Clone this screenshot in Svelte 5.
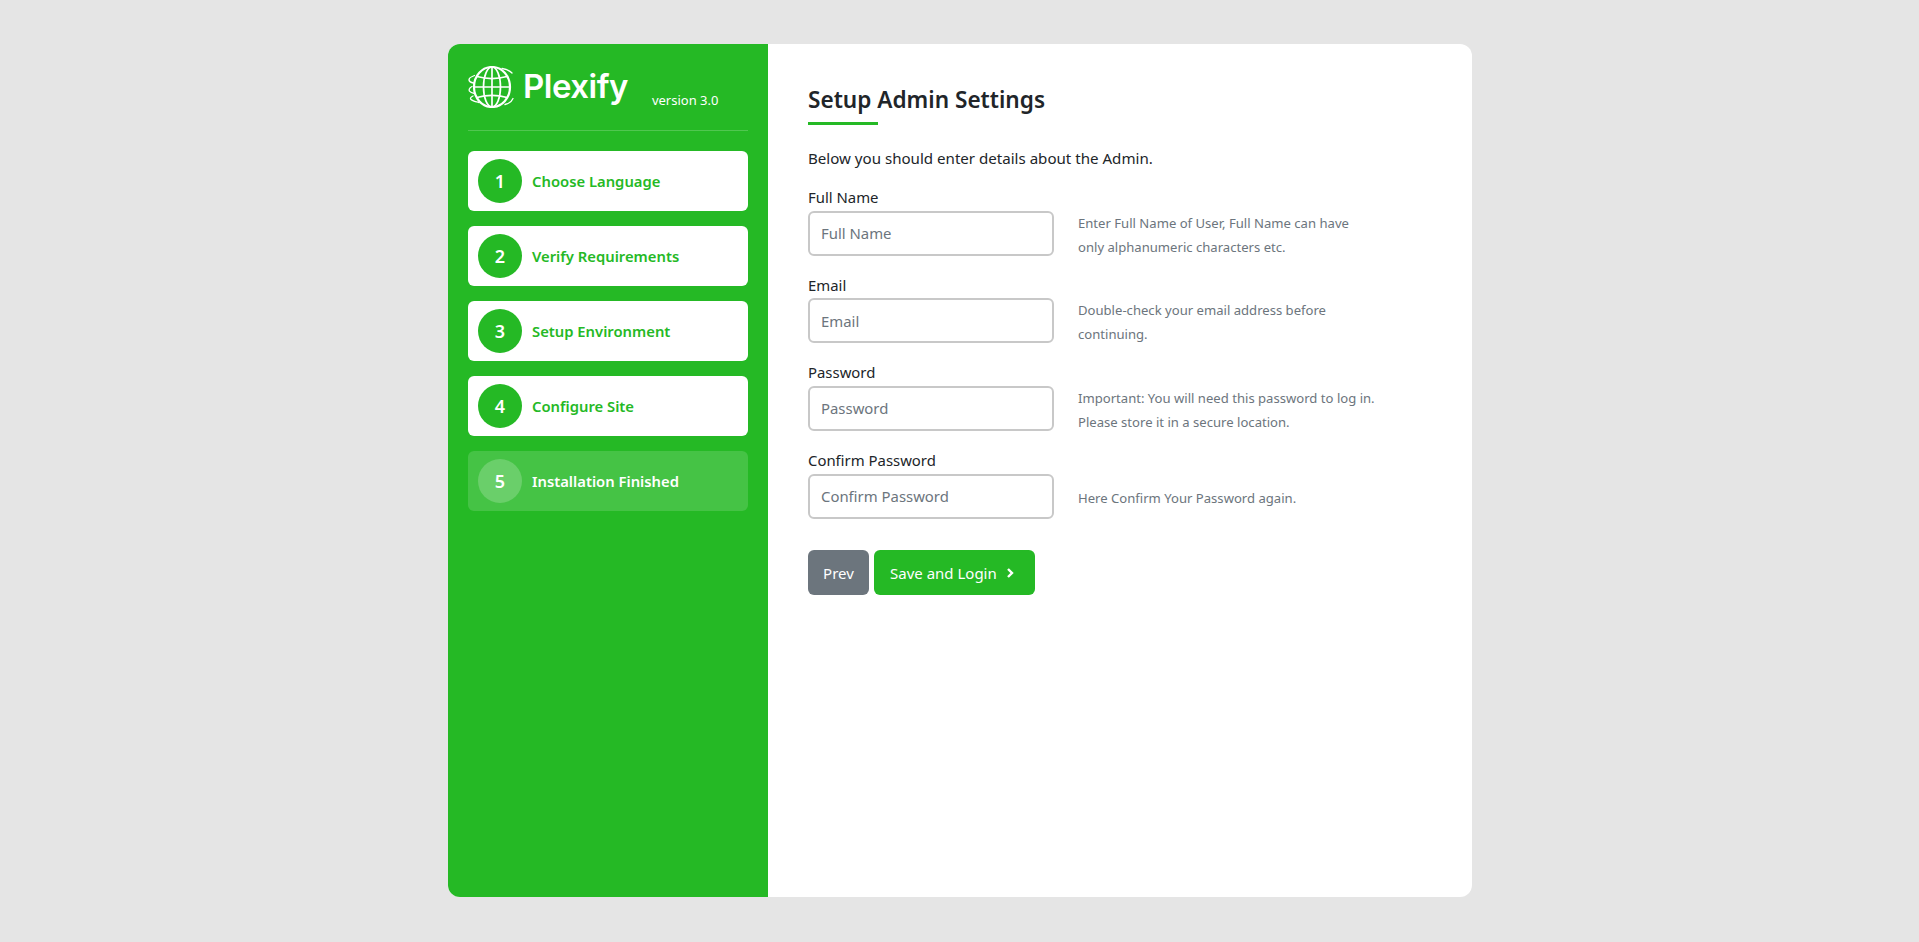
<script>
	const steps = [
		{ n: 1, label: 'Choose Language', done: true },
		{ n: 2, label: 'Verify Requirements', done: true },
		{ n: 3, label: 'Setup Environment', done: true },
		{ n: 4, label: 'Configure Site', done: true },
		{ n: 5, label: 'Installation Finished', done: false }
	];

	const fields = [
		{ label: 'Full Name', type: 'text', hint: ['Enter Full Name of User, Full Name can have', 'only alphanumeric characters etc.'] },
		{ label: 'Email', type: 'email', hint: ['Double-check your email address before', 'continuing.'] },
		{ label: 'Password', type: 'password', hint: ['Important: You will need this password to log in.', 'Please store it in a secure location.'] },
		{ label: 'Confirm Password', type: 'password', hint: ['Here Confirm Your Password again.'] }
	];
</script>

<div class="page">
	<div class="card">
		<aside class="sidebar">
			<div class="brand">
				<svg class="globe" viewBox="0 0 46 42" fill="none" stroke="#fff" stroke-linecap="round">
					<ellipse cx="24" cy="21" rx="18" ry="20" stroke-width="2.200" />
					<ellipse cx="24" cy="21" rx="8.500" ry="20" stroke-width="1.700" />
					<path d="M24 1v40" stroke-width="1.700" />
					<path d="M9 10.500c9 2.500 21 2.500 30 0M6 21h36M9 31.500c9-2.500 21-2.500 30 0" stroke-width="1.700" />
					<path d="M34 2.500c4 .5 7.500 2 10 4.500M6.500 9.500C2.500 11 .8 12.500 1 14c.3 1.500 2 2.500 4.500 3M4 20.500C1 22 .8 24 1.500 25.200 2.500 26.500 4 27 6.500 27.500M5 30C2.500 31 2 32.500 3 33.500c1.500 1.500 4 2 8 3M37 38.500c4-1 7-3.500 8-6" stroke-width="1.300" />
				</svg>
				<span class="name">Plexify</span>
				<span class="version">version 3.0</span>
			</div>
			<hr />
			<ul class="steps">
				{#each steps as step}
					<li class="step" class:done={step.done}>
						<span class="num">{step.n}</span>
						<span class="label">{step.label}</span>
					</li>
				{/each}
			</ul>
		</aside>

		<main class="content">
			<h2>Setup Admin Settings</h2>
			<p class="intro">Below you should enter details about the Admin.</p>
			<form on:submit|preventDefault>
				{#each fields as field}
					<div class="field">
						<label for={field.label}>{field.label}</label>
						<div class="row">
							<input id={field.label} type={field.type} placeholder={field.label} />
							<div class="hint">
								{#each field.hint as line}
									<div>{line}</div>
								{/each}
							</div>
						</div>
					</div>
				{/each}
				<div class="actions">
					<button type="button" class="prev">Prev</button>
					<button type="submit" class="next">
						Save and Login
						<svg class="chevron" viewBox="0 0 8 10" fill="none" stroke="#fff" stroke-width="2.400">
							<path d="M2 1l4 4-4 4" />
						</svg>
					</button>
				</div>
			</form>
		</main>
	</div>
</div>

<style>
	:global(body) {
		background: #e5e5e5;
		font-family: "Noto Sans", "Open Sans", sans-serif;
		color: #212529;
	}

	.page {
		height: 942px;
		padding: 44px 447px 45px 448px;
		box-sizing: border-box;
	}

	.card {
		display: flex;
		height: 853px;
		background: #fff;
		border-radius: 12px;
		overflow: hidden;
	}

	.sidebar {
		width: 320px;
		padding: 20px;
		box-sizing: border-box;
		background: #25b925;
		flex-shrink: 0;
	}

	.brand {
		display: flex;
		align-items: flex-start;
		height: 45px;
		margin-bottom: 21px;
		color: #fff;
	}

	.globe {
		width: 46px;
		height: 42px;
		margin-top: 2px;
		flex-shrink: 0;
	}

	.name {
		margin: 2px 0 0 9px;
		font-family: Inter, sans-serif;
		font-size: 33px;
		font-weight: 600;
		line-height: 40px;
		letter-spacing: -0.5px;
	}

	.version {
		margin: 27px 0 0 24px;
		font-size: 13px;
		line-height: 18px;
	}

	hr {
		height: 1px;
		margin: 0 0 20px;
		border: none;
		background: rgba(255, 255, 255, 0.2);
	}

	.steps {
		display: flex;
		flex-direction: column;
		gap: 15px;
		margin: 0;
		padding: 0;
		list-style: none;
	}

	.step {
		display: flex;
		align-items: center;
		gap: 10px;
		height: 60px;
		padding-left: 10px;
		border-radius: 6px;
		background: rgba(255, 255, 255, 0.15);
		color: #fff;
		font-size: 14.800px;
		font-weight: 600;
	}

	.step.done {
		background: #fff;
		color: #25b925;
	}

	.num {
		display: flex;
		align-items: center;
		justify-content: center;
		width: 44px;
		height: 44px;
		border-radius: 50%;
		background: rgba(255, 255, 255, 0.2);
		color: #fff;
		font-size: 18px;
	}

	.step.done .num {
		background: #25b925;
	}

	.content {
		flex: 1;
		padding: 41px 40px 40px;
	}

	h2 {
		position: relative;
		margin: 0 0 21px;
		padding-bottom: 10px;
		font-size: 22.600px;
		font-weight: 600;
		line-height: 30px;
	}

	h2::after {
		content: "";
		position: absolute;
		left: 0;
		bottom: 0;
		width: 70px;
		height: 3px;
		background: #25b925;
	}

	.intro {
		margin: 0 0 15px;
		font-size: 15.100px;
		line-height: 24px;
	}

	.field {
		margin-bottom: 15.700px;
	}

	label {
		display: block;
		font-size: 14.900px;
		line-height: 24px;
	}

	.row {
		display: flex;
		align-items: center;
		gap: 24px;
		min-height: 48px;
	}

	input {
		width: 246px;
		height: 45px;
		padding: 6px 11px;
		box-sizing: border-box;
		border: 2px solid #c8c8c8;
		border-radius: 6px;
		font: inherit;
		font-size: 14.900px;
		color: #212529;
		outline: none;
	}

	input::placeholder {
		color: #6c757d;
	}

	.hint {
		margin: 1.500px 0 -1.500px;
		font-size: 13.100px;
		line-height: 24px;
		color: #6c757d;
	}

	.actions {
		display: flex;
		gap: 5px;
		margin-top: 30px;
	}

	button {
		height: 45px;
		border: none;
		border-radius: 6px;
		color: #fff;
		font: inherit;
		font-size: 15px;
	}

	.prev {
		width: 61px;
		padding: 0;
		background: #6c757d;
	}

	.next {
		display: flex;
		align-items: center;
		gap: 9px;
		padding: 0 21px 0 16px;
		background: #25b925;
	}

	.chevron {
		width: 8px;
		height: 10px;
	}
</style>
